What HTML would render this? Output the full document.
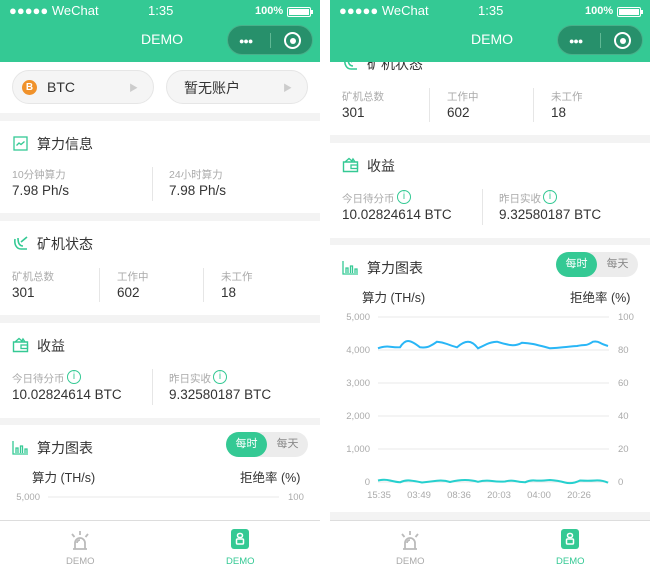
<!DOCTYPE html>
<html><head><meta charset="utf-8"><style>
*{margin:0;padding:0;box-sizing:border-box}
html,body{width:650px;height:568px;overflow:hidden}
body{background:#fff;position:relative;font-family:"Liberation Sans","Noto Sans CJK SC",sans-serif;color:#333}
.phone{position:absolute;top:0;width:320px;height:568px;overflow:hidden;background:#f3f3f3}
.hdr{position:absolute;left:0;top:0;width:320px;height:62px;background:#34c994;color:#fff;z-index:5}
.sb{position:absolute;top:3px;font-size:13px;}
.cap{position:absolute;left:227px;top:25px;width:86px;height:30px;border-radius:15px;background:#27906b;border:1px solid #48b08a}
.viewport{position:absolute;left:0;top:62px;width:320px;height:458px;overflow:hidden}
.content{position:absolute;left:0;width:320px;height:760px}
.w{position:absolute;left:0;width:320px;background:#fff}
.abs{position:absolute;white-space:nowrap}
.t{font-size:14px;color:#333}
.l{font-size:10.5px;color:#aaa}
.v{font-size:13.5px;color:#333}
.vd{position:absolute;width:1px;background:#e6e6e6}
.tab{position:absolute;left:0;top:520px;width:320px;height:48px;background:#fff;border-top:1px solid #ddd}
.info{position:absolute;width:14px;height:14px;border:1.3px solid #34c994;border-radius:50%;color:#34c994;font-size:10px;text-align:center;line-height:12px}
</style></head><body>

<div class="phone" style="left:0">
 <div class="hdr">
  <div class="sb" style="left:9px">●●●●● WeChat</div>
  <div class="sb" style="left:148px">1:35</div>
  <div class="sb" style="left:255px;font-size:11px;top:5px;font-weight:bold">100%</div>
  <div style="position:absolute;left:287px;top:7px;width:24px;height:10px;border:1.5px solid #fff;border-radius:2px;padding:1px"><div style="background:#fff;width:100%;height:100%"></div></div>
  <div style="position:absolute;left:311px;top:10px;width:2px;height:4px;background:#fff"></div>
  <div class="abs" style="left:141px;top:31px;font-size:14px">DEMO</div>
  <div class="cap">
   <div style="position:absolute;left:11px;top:10px;font-size:9px;letter-spacing:-1px">●●●</div>
   <div style="position:absolute;left:42px;top:7px;width:1px;height:15px;background:#5fb894"></div>
   <div style="position:absolute;left:56px;top:6px;width:17px;height:17px;border:2px solid #fff;border-radius:50%"><div style="position:absolute;left:3.5px;top:3.5px;width:6px;height:6px;border-radius:50%;background:#fff"></div></div>
  </div>
 </div>
 <div class="viewport"><div class="content" style="top:-62px">
  <div class="w" style="top:62px;height:51px">
   <div class="abs" style="left:12px;top:8px;width:142px;height:34px;border-radius:17px;background:#f5f5f5;border:1px solid #e6e6e6"></div>
   <div class="abs" style="left:22px;top:18px;width:15px;height:15px;border-radius:50%;background:#f0922b;color:#fff;font-size:10px;font-weight:bold;text-align:center;line-height:15px">B</div>
   <div class="abs" style="left:47px;top:17px;font-size:14px">BTC</div>
   <div class="abs" style="left:129px;top:19px;font-size:9px;color:#ccc">▶</div>
   <div class="abs" style="left:166px;top:8px;width:142px;height:34px;border-radius:17px;background:#f5f5f5;border:1px solid #e6e6e6"></div>
   <div class="abs" style="left:184px;top:16px;font-size:14px">暂无账户</div>
   <div class="abs" style="left:283px;top:19px;font-size:9px;color:#ccc">▶</div>
  </div>
  <div class="w" style="top:121px;height:92px">
   <svg class="abs" style="left:13px;top:15px" width="15" height="15"><rect x="1" y="1" width="13" height="13" fill="none" stroke="#34c994" stroke-width="1.3"/><polyline points="3.5,9.5 6,7 8,8.5 11.5,5.5" fill="none" stroke="#34c994" stroke-width="1.3"/></svg>
   <div class="abs t" style="left:37px;top:13px">算力信息</div>
   <div class="abs l" style="left:12px;top:46px">10分钟算力</div>
   <div class="abs v" style="left:12px;top:62px">7.98 Ph/s</div>
   <div class="vd" style="left:152px;top:46px;height:34px"></div>
   <div class="abs l" style="left:169px;top:46px">24小时算力</div>
   <div class="abs v" style="left:169px;top:62px">7.98 Ph/s</div>
  </div>
  <div class="w" style="top:221px;height:94px">
   <svg class="abs" style="left:12px;top:14px" width="17" height="17"><path d="M3 4 C2 10 5 14 9 14 L15 14 M6 3 C6 9 8 11 11 11 M9 7 L15 2" fill="none" stroke="#34c994" stroke-width="1.6"/></svg>
   <div class="abs t" style="left:37px;top:13px">矿机状态</div>
   <div class="abs l" style="left:12px;top:48px">矿机总数</div>
   <div class="abs v" style="left:12px;top:64px">301</div>
   <div class="vd" style="left:99px;top:47px;height:34px"></div>
   <div class="abs l" style="left:117px;top:48px">工作中</div>
   <div class="abs v" style="left:117px;top:64px">602</div>
   <div class="vd" style="left:203px;top:47px;height:34px"></div>
   <div class="abs l" style="left:221px;top:48px">未工作</div>
   <div class="abs v" style="left:221px;top:64px">18</div>
  </div>
  <div class="w" style="top:323px;height:95px">
   <svg class="abs" style="left:12px;top:14px" width="17" height="16"><path d="M1.5 5 L1.5 14.5 L15.5 14.5 L15.5 5 Z M3 5 L7 1.5 L10 4 L11 2 L13 5" fill="none" stroke="#34c994" stroke-width="1.4"/><rect x="9" y="8" width="6.5" height="3.5" fill="none" stroke="#34c994" stroke-width="1.3"/></svg>
   <div class="abs t" style="left:37px;top:13px">收益</div>
   <div class="abs l" style="left:12px;top:48px">今日待分币</div>
   <div class="info" style="left:67px;top:47px">i</div>
   <div class="abs v" style="left:12px;top:64px">10.02824614 BTC</div>
   <div class="vd" style="left:152px;top:46px;height:36px"></div>
   <div class="abs l" style="left:169px;top:48px">昨日实收</div>
   <div class="info" style="left:213px;top:47px">i</div>
   <div class="abs v" style="left:169px;top:64px">9.32580187 BTC</div>
  </div>
  <div class="w" style="top:425px;height:267px">
   <svg class="abs" style="left:12px;top:15px" width="17" height="15"><path d="M1 1 L1 14 L16 14 M4 13 L4 8 L6 8 L6 13 M8.5 13 L8.5 6 L10.5 6 L10.5 13 M13 13 L13 9 L15 9 L15 13" fill="none" stroke="#34c994" stroke-width="1.3"/></svg>
   <div class="abs t" style="left:37px;top:13px">算力图表</div>
   <div class="abs" style="left:226px;top:7px;width:82px;height:25px;border-radius:13px;background:#ececec"></div>
   <div class="abs" style="left:226px;top:7px;width:41px;height:25px;border-radius:13px;background:#34c994;color:#fff;font-size:11px;text-align:center;line-height:25px">每时</div>
   <div class="abs" style="left:267px;top:7px;width:41px;height:25px;color:#888;font-size:11px;text-align:center;line-height:25px">每天</div>
   <div class="abs" style="left:32px;top:42px;font-size:12.5px">算力 (TH/s)</div>
   <div class="abs" style="left:240px;top:42px;font-size:12.5px">拒绝率 (%)</div>
   <svg class="abs" style="left:0;top:55px" width="320" height="210">
    <g stroke="#e8e8e8" stroke-width="1">
     <line x1="48" y1="17" x2="279" y2="17"/><line x1="48" y1="50" x2="279" y2="50"/><line x1="48" y1="83" x2="279" y2="83"/><line x1="48" y1="116" x2="279" y2="116"/><line x1="48" y1="149" x2="279" y2="149"/><line x1="48" y1="182" x2="279" y2="182"/>
    </g>
    <g font-size="9.5" fill="#aaa" font-family="Liberation Sans,sans-serif" text-anchor="end">
     <text x="40" y="20">5,000</text><text x="40" y="53">4,000</text><text x="40" y="86">3,000</text><text x="40" y="119">2,000</text><text x="40" y="152">1,000</text><text x="40" y="185">0</text>
    </g>
    <g font-size="9.5" fill="#aaa" font-family="Liberation Sans,sans-serif">
     <text x="288" y="20">100</text><text x="288" y="53">80</text><text x="288" y="86">60</text><text x="288" y="119">40</text><text x="288" y="152">20</text><text x="288" y="185">0</text>
    </g>
    <g font-size="9.5" fill="#aaa" font-family="Liberation Sans,sans-serif" text-anchor="middle">
     <text x="49" y="198">15:35</text><text x="89" y="198">03:49</text><text x="129" y="198">08:36</text><text x="169" y="198">20:03</text><text x="209" y="198">04:00</text><text x="249" y="198">20:26</text>
    </g>
    <path d="M48 48.3 Q54 46 60 46.7 T70 47.3 Q74 41 78 41 T90 47.3 Q96 48 100 46 T107 41.7 Q112 42 117 44 T127 47.3 Q133 41.7 138 41.7 T148 48.3 Q153 46 157 44 T167 41.7 Q174 44 180 45 T192 42.7 Q198 43 203 44 T220 48.3 Q227 48 233 47.3 T247 46 Q252 45 255 45 T263 41.7 Q267 41 270 42.7 T278 46" fill="none" stroke="#29b6f6" stroke-width="2"/>
    <path d="M48 180.5 Q54 179 60 180.5 T70 182.3 Q75 180 80 180.5 T92 182.5 Q100 181.5 107 180.7 T120 182 Q128 180 135 180 T148 181.8 Q155 180 162 181 T175 181.5 Q180 180 185 181 T195 182.3 Q200 180 205 180.5 T220 180 Q228 180.5 235 182.5 T250 180.5 Q258 181 265 180.5 T278 182.7" fill="none" stroke="#26d0ce" stroke-width="2"/>
   </svg>
  </div>
 </div></div>
 <div class="tab">
  <svg class="abs" style="left:69px;top:8px" width="22" height="22"><path d="M4 20 L18 20 M6 20 L6 14 A5 5 0 0 1 16 14 L16 20 M8 14 A3 3 0 0 1 11 11 M11 2 L11 6 M3 5 L5.5 8 M19 5 L16.5 8" fill="none" stroke="#bbb" stroke-width="1.8"/></svg>
  <div class="abs" style="left:66px;top:35px;font-size:9.5px;color:#aaa">DEMO</div>
  <div class="abs" style="left:231px;top:8px;width:18px;height:20px;border-radius:3px;background:#34c994"></div>
  <svg class="abs" style="left:231px;top:8px" width="18" height="20"><rect x="6.5" y="4.5" width="5" height="4" rx="2" fill="none" stroke="#fff" stroke-width="1.5"/><rect x="5.5" y="10" width="7" height="5" rx="1" fill="none" stroke="#fff" stroke-width="1.5"/></svg>
  <div class="abs" style="left:226px;top:35px;font-size:9.5px;color:#34c994">DEMO</div>
 </div>
</div>

<div class="phone" style="left:330px" id="p2"></div>
<script>
var p1=document.querySelector('.phone');
var p2=document.getElementById('p2');
p2.innerHTML=p1.innerHTML;
p2.querySelector('.content').style.top='-242px';
</script>
</body></html>
